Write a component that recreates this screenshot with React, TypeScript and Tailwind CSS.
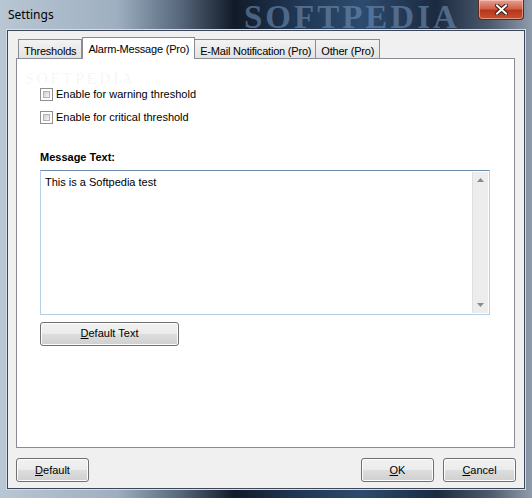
const font = { fontFamily: '"Liberation Sans", Arial, sans-serif' }

function Checkbox() {
  return (
    <span className="w-[13px] h-[13px] border border-[#8e8f8f] bg-white p-[2px] flex">
      <span className="flex-1 bg-gradient-to-br from-[#cbcfd5] to-[#f6f6f6] border border-[#b0b3b8]" />
    </span>
  )
}

function WinButton({ children, className = "" }: { children: React.ReactNode; className?: string }) {
  return (
    <button
      className={`h-[24px] rounded-[3px] border border-[#707070] text-[11px] text-black flex items-center justify-center shadow-[inset_0_0_0_1px_#fcfcfc] bg-[linear-gradient(#f2f2f2_0%,#ebebeb_48%,#dddddd_52%,#cfcfcf_100%)] ${className}`}
    >
      {children}
    </button>
  )
}

function Tab({ label, active }: { label: string; active?: boolean }) {
  if (active)
    return (
      <div className="h-[22px] -mb-px z-10 px-[5px] pt-[3px] border border-b-0 border-[#898c95] bg-white text-[11px] tracking-[-0.2px] text-black">
        {label}
      </div>
    )
  return (
    <div className="h-[19px] px-[5px] pt-[3px] border border-[#898c95] border-b-0 -mx-px first:mx-0 bg-[linear-gradient(#f3f3f3,#e3e3e3)] text-[11px] tracking-[-0.2px] text-black">
      {label}
    </div>
  )
}

export default function App() {
  return (
    <div
      style={font}
      className="w-[532px] h-[498px] relative overflow-hidden flex flex-col bg-[linear-gradient(90deg,#b9c6d3_0%,#9eafc1_22%,#56667b_34%,#121a28_44%,#1f3551_55%,#2d4b6e_68%,#1b2a40_82%,#4c5a6d_92%,#8f9cab_100%)]"
    >
      {/* title bar */}
      <div className="h-[30px] flex items-center pl-[8px] shrink-0">
        <span className="text-[12px] text-black" style={{ fontFamily: '"Noto Sans", sans-serif' }}>
          Settings
        </span>
      </div>
      <div
        className="absolute left-[244px] top-[-7px] text-[33px] font-bold tracking-[3px] text-[#6f8fb4]/60 select-none"
        style={{ fontFamily: '"Liberation Serif", serif' }}
      >
        SOFTPEDIA
      </div>
      <div className="absolute left-[478px] top-0 w-[46px] h-[20px] rounded-b-[4px] border border-t-0 border-[#5a2a22] bg-[linear-gradient(#e8a192_0%,#d0614a_45%,#b7361c_55%,#c9502f_100%)] flex items-center justify-center shadow-[inset_0_0_0_1px_rgba(255,220,210,0.5)]">
        <svg width="13" height="11" viewBox="0 0 13 11">
          <path d="M2 1.5 L11 9.5 M11 1.5 L2 9.5" stroke="#3a1a14" strokeWidth="4" strokeLinecap="square" />
          <path d="M2 1.5 L11 9.5 M11 1.5 L2 9.5" stroke="#ffffff" strokeWidth="2" strokeLinecap="square" />
        </svg>
      </div>

      {/* client area */}
      <div className="mx-[7px] h-[459px] border border-[#3c4656] bg-[#f0f0f0] flex flex-col pt-[5px] px-[8px] shadow-[0_0_0_1px_#d5dde6]">
        {/* tabs */}
        <div className="flex items-end pl-[2px] h-[22px]">
          <Tab label="Thresholds" />
          <Tab label="Alarm-Message (Pro)" active />
          <Tab label="E-Mail Notification (Pro)" />
          <Tab label="Other (Pro)" />
        </div>
        <div className="w-[499px] h-[390px] border border-[#898c95] bg-white relative pl-[23px] pt-[29px]">
          <div
            className="absolute left-[8px] top-[12px] leading-[16px] text-[16px] font-bold tracking-[2px] text-[#000]/[0.04] select-none"
            style={{ fontFamily: '"Liberation Serif", serif' }}
          >
            SOFTPEDIA
          </div>
          <div className="flex flex-col gap-[10px] text-[11px] text-black">
            <label className="flex items-center gap-[3px] h-[13px]">
              <Checkbox />
              Enable for warning threshold
            </label>
            <label className="flex items-center gap-[3px] h-[13px]">
              <Checkbox />
              Enable for critical threshold
            </label>
          </div>
          <div className="mt-[25px] text-[11px] font-bold text-black">Message Text:</div>
          <div className="mt-[4px] w-[450px] h-[145px] border border-[#b5cfe7] border-t-[#6d8db0] bg-white flex">
            <div className="flex-1 px-[4px] pt-[3px] text-[11px] text-black">This is a Softpedia test</div>
            <div className="w-[16px] my-px mr-px bg-[#ededed] border-l border-[#e0e0e0] flex flex-col items-center justify-between py-[6px]">
              <svg width="7" height="4" viewBox="0 0 7 4"><path d="M0 4 L3.5 0 L7 4 Z" fill="#8a8a8a" /></svg>
              <svg width="7" height="4" viewBox="0 0 7 4"><path d="M0 0 L3.5 4 L7 0 Z" fill="#8a8a8a" /></svg>
            </div>
          </div>
          <WinButton className="mt-[7px] w-[139px]">
            <span><u>D</u>efault Text</span>
          </WinButton>
        </div>

        {/* bottom buttons */}
        <div className="flex mt-[10px] gap-[9px]">
          <WinButton className="w-[73px] mr-auto">
            <span><u>D</u>efault</span>
          </WinButton>
          <WinButton className="w-[73px]">
            <span><u>O</u>K</span>
          </WinButton>
          <WinButton className="w-[73px]">
            <span><u>C</u>ancel</span>
          </WinButton>
        </div>
      </div>
    </div>
  )
}
